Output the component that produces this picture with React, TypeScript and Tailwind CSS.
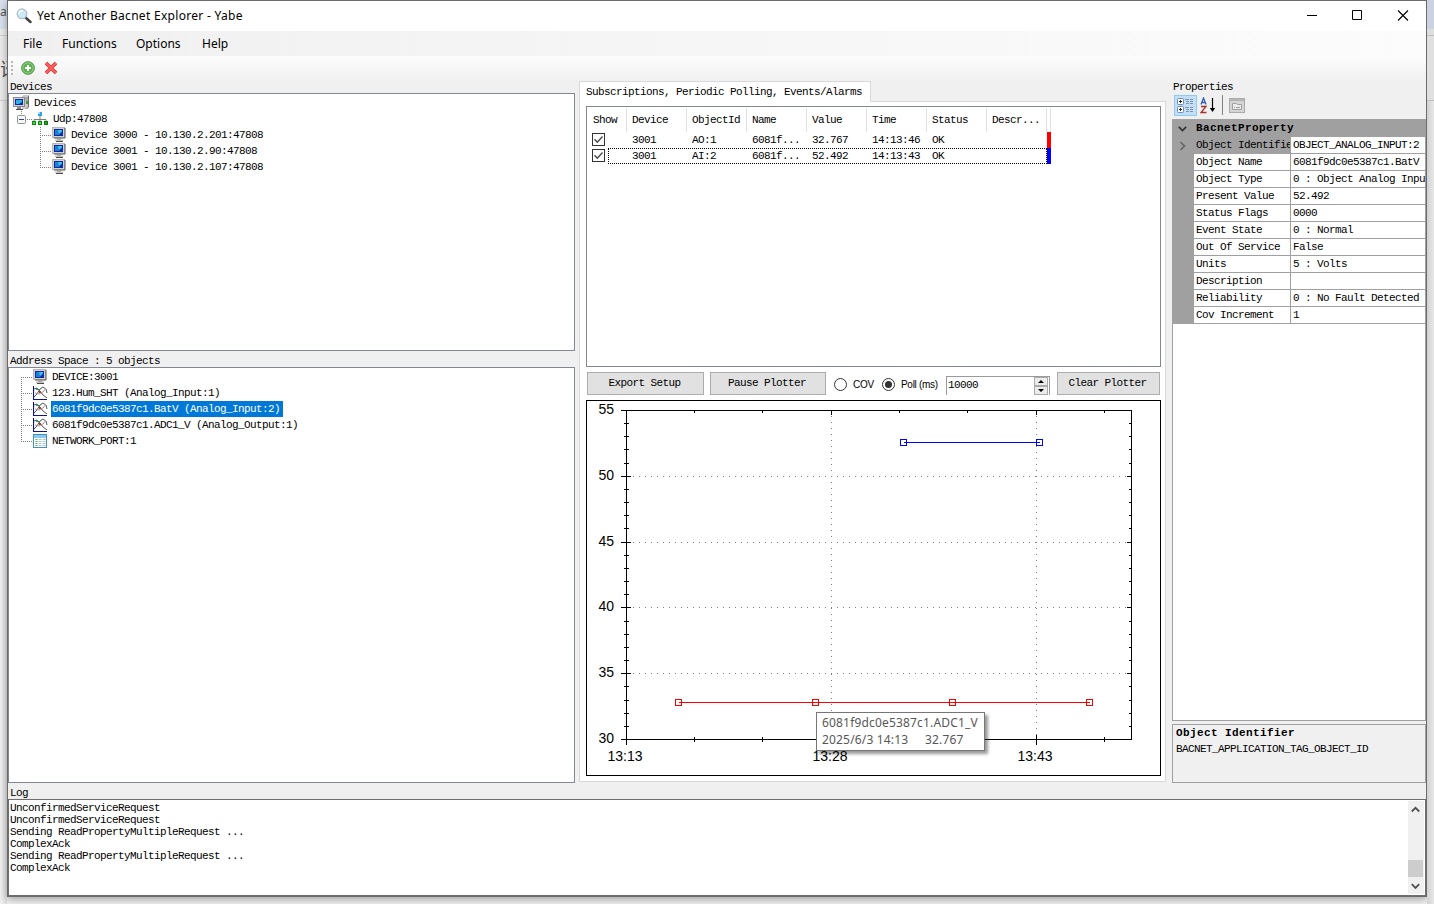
import type { ReactNode } from 'react'
import clsx from 'clsx'

const MONO = "font-['Liberation_Mono',monospace] text-[11px] tracking-[-0.6px]"
const UI = "font-['Noto_Sans',sans-serif]"

const devices = [
  'Device 3000 - 10.130.2.201:47808',
  'Device 3001 - 10.130.2.90:47808',
  'Device 3001 - 10.130.2.107:47808',
]

const objects = [
  { icon: 'device', label: 'DEVICE:3001' },
  { icon: 'analog', label: '123.Hum_SHT (Analog_Input:1)' },
  { icon: 'analog', label: '6081f9dc0e5387c1.BatV (Analog_Input:2)', selected: true },
  { icon: 'analog', label: '6081f9dc0e5387c1.ADC1_V (Analog_Output:1)' },
  { icon: 'table', label: 'NETWORK_PORT:1' },
]

const columns = ['Device', 'ObjectId', 'Name', 'Value', 'Time', 'Status', 'Descr...']

const subscriptions = [
  ['3001', 'AO:1', '6081f...', '32.767', '14:13:46', 'OK', ''],
  ['3001', 'AI:2', '6081f...', '52.492', '14:13:43', 'OK', ''],
]

const properties = [
  ['Object Name', '6081f9dc0e5387c1.BatV'],
  ['Object Type', '0 : Object Analog Inpu'],
  ['Present Value', '52.492'],
  ['Status Flags', '0000'],
  ['Event State', '0 : Normal'],
  ['Out Of Service', 'False'],
  ['Units', '5 : Volts'],
  ['Description', ''],
  ['Reliability', '0 : No Fault Detected'],
  ['Cov Increment', '1'],
]

const logLines = [
  'UnconfirmedServiceRequest',
  'UnconfirmedServiceRequest',
  'Sending ReadPropertyMultipleRequest ...',
  'ComplexAck',
  'Sending ReadPropertyMultipleRequest ...',
  'ComplexAck',
]

function MonitorIcon() {
  return (
    <svg width="16" height="16" viewBox="0 0 16 16" className="shrink-0">
      <rect x="0.5" y="0.5" width="12" height="10" fill="#d6d3ce" stroke="#b9b7af" />
      <path d="M13 1v10H2" fill="none" stroke="#55555c" />
      <rect x="2" y="2" width="9" height="7" fill="#0a2aa8" />
      <path d="M3 3h7v2L7 8H3z" fill="#1c7fd0" />
      <path d="M6 3h4v1L7 7z" fill="#3fc0f0" />
      <path d="M5 11h4v2H5z" fill="#9b9b98" />
      <path d="M3 12.5h8V14H3z" fill="#c5c3be" />
      <path d="M4 14.5h7" stroke="#4c4c4c" />
    </svg>
  )
}

function ComputerIcon() {
  return (
    <svg width="16" height="16" viewBox="0 0 16 16" className="shrink-0">
      <path d="M9 1l2-1h5v12l-2 2H9z" fill="#c9c9c9" />
      <path d="M15.5 1v11l-2 2" fill="none" stroke="#6c6c6c" />
      <path d="M12 3h3M12 5h3" stroke="#8d8d8d" />
      <path d="M13 6h2v3h-2z" fill="#3b9b35" />
      <rect x="0.5" y="2.5" width="11" height="9" fill="#d6d3ce" stroke="#8c8c8c" />
      <rect x="2" y="4" width="8" height="6" fill="#0a2aa8" />
      <path d="M3 5h6v2L6 9H3z" fill="#2db3ea" />
      <path d="M4 12h4v2H4z" fill="#8b8b8b" />
      <path d="M3 14.5h7" stroke="#444" />
    </svg>
  )
}

function NetworkIcon() {
  return (
    <svg width="16" height="16" viewBox="0 0 16 16" className="shrink-0">
      <path d="M8 5v3M2 11V8.5h12V11M8 8v3" fill="none" stroke="#7d7d7d" />
      <rect x="6" y="1" width="4" height="4" fill="#2aa3e8" />
      <rect x="6" y="1" width="2" height="2" fill="#9ce0fb" />
      <rect x="0.5" y="10.5" width="3" height="3" fill="#3ddb3d" stroke="#0b8a0b" />
      <rect x="6.5" y="10.5" width="3" height="3" fill="#3ddb3d" stroke="#0b8a0b" />
      <rect x="12.5" y="10.5" width="3" height="3" fill="#18a818" stroke="#0b7a0b" />
    </svg>
  )
}

function AnalogIcon() {
  return (
    <svg width="16" height="16" viewBox="0 0 16 16" className="shrink-0">
      <path d="M0.5 1v13.5H14" fill="none" stroke="#10109c" strokeWidth="1.2" />
      <path d="M1 4l3-1 3 3 3 4 4 3" fill="none" stroke="#555" />
      <path d="M1 12l3-3 3-5 3-2 3 2 1 4" fill="none" stroke="#4c5a5a" />
      <path d="M2 8l4 1 4-2 3-4" fill="none" stroke="#9a9a9a" />
      <rect x="3" y="3" width="2" height="2" fill="#2e9b72" />
      <rect x="6" y="6" width="2" height="2" fill="#c33" />
    </svg>
  )
}

function TableIcon() {
  return (
    <svg width="16" height="16" viewBox="0 0 16 16" className="shrink-0">
      <rect x="0.5" y="1.5" width="13" height="13" fill="#fff" stroke="#3f8fc4" />
      <rect x="1" y="2" width="12" height="3" fill="#8cc9ec" />
      <path d="M2.5 6.5h2M2.5 8.5h2M2.5 10.5h2M2.5 12.5h2" stroke="#58b558" />
      <path
        d="M5.5 6.5h3M9.5 6.5h3M5.5 8.5h3M9.5 8.5h3M5.5 10.5h3M9.5 10.5h3M5.5 12.5h3M9.5 12.5h3"
        stroke="#a9c6e2"
      />
    </svg>
  )
}

function Branch({ first, last, width, x }: { first?: boolean; last?: boolean; width: number; x: number }) {
  return (
    <svg width={width} height="16" viewBox={`0 0 ${width} 16`} className="shrink-0">
      <path
        d={`M${x + 0.5} ${first ? 8 : 0}V${last ? 9 : 16}M${x} 8.5H${width}`}
        fill="none"
        stroke="#808080"
        strokeDasharray="1 1"
      />
    </svg>
  )
}

function TitleBar() {
  return (
    <div className="flex h-[30px] items-center bg-white">
      <svg width="16" height="16" viewBox="0 0 16 16" className="ml-2">
        <path d="M9.5 9.5l5 4.5" stroke="#3f3f3f" strokeWidth="2.4" strokeLinecap="round" />
        <circle cx="6" cy="5.8" r="4.8" fill="#cdeaf8" stroke="#b3c0ca" strokeWidth="1.3" />
        <path d="M3 5.5A3 3 0 0 1 7 2.8" stroke="#fff" strokeWidth="1.3" fill="none" />
      </svg>
      <span className={clsx(UI, 'ml-[5px] text-[12px] tracking-[0.3px] whitespace-pre text-black')}>
        Yet Another Bacnet Explorer - Yabe
      </span>
      <div className="ml-auto flex items-center pr-[17px] pb-px">
        <svg width="102" height="11" viewBox="0 0 102 11" fill="none" stroke="#000">
          <path d="M0 5.5h10" />
          <path d="M45.5 0.5h9v9h-9z" />
          <path d="M91 0.5l10 10M101 0.5l-10 10" strokeWidth="1.1" />
        </svg>
      </div>
    </div>
  )
}

function MenuBar() {
  return (
    <div
      className={clsx(
        UI,
        'flex h-[25px] items-center bg-linear-to-r from-[#f0f0f0] to-[#fcfcfc] pl-[15px] text-[12px] tracking-normal text-black',
      )}
    >
      <span className="w-[39px]">File</span>
      <span className="w-[74px]">Functions</span>
      <span className="w-[66px]">Options</span>
      <span>Help</span>
    </div>
  )
}

function ToolBar() {
  return (
    <div className="flex h-[25px] items-center bg-linear-to-b from-[#fdfdfd] to-[#f0f0f0] pb-[2px] pl-[3px]">
      <svg width="2" height="14" viewBox="0 0 2 14" fill="#b8b8b8">
        <path d="M0 0h2v2H0zM0 4h2v2H0zM0 8h2v2H0zM0 12h2v2H0z" />
      </svg>
      <svg width="14" height="14" viewBox="0 0 14 14" className="ml-2">
        <circle cx="7" cy="7" r="6.3" fill="#5cb050" stroke="#3f8f3a" />
        <circle cx="7" cy="7" r="5.2" fill="none" stroke="#a5d99a" strokeWidth="0.8" />
        <path d="M7 4v6M4 7h6" stroke="#fff" strokeWidth="2" />
      </svg>
      <svg width="14" height="14" viewBox="0 0 14 14" className="ml-[9px]">
        <path d="M2 2l10 10M12 2l-10 10" stroke="#d92f2f" strokeWidth="3.6" />
        <path d="M2 2l10 10M12 2l-10 10" stroke="#f8605c" strokeWidth="2.2" />
      </svg>
    </div>
  )
}

function DeviceTree() {
  return (
    <div className="h-[258px] border border-[#828790] bg-white pt-px">
      <div className="flex h-4 items-center pl-1">
        <ComputerIcon />
        <span className="ml-[5px]">Devices</span>
      </div>
      <div className="flex h-4 items-center pl-2">
        <svg width="15" height="16" viewBox="0 0 15 16" className="shrink-0">
          <path d="M4.5 0v4M10 8.5h5" stroke="#808080" strokeDasharray="1 1" />
          <rect x="0.5" y="4.5" width="8" height="8" rx="1" fill="#f6f6f6" stroke="#919191" />
          <path d="M2 8.5h5" stroke="#33498a" />
        </svg>
        <NetworkIcon />
        <span className="ml-[5px]">Udp:47808</span>
      </div>
      {devices.map((d, i) => (
        <div key={d} className="flex h-4 items-center pl-[31px]">
          <Branch x={0} width={12} last={i === devices.length - 1} />
          <MonitorIcon />
          <span className="ml-[3px] whitespace-pre">{d}</span>
        </div>
      ))}
    </div>
  )
}

function AddressTree() {
  return (
    <div className="h-[416px] border border-[#828790] bg-white pt-px">
      {objects.map((o, i) => (
        <div key={o.label} className="flex h-4 items-center pl-3">
          <Branch x={0} width={12} first={i === 0} last={i === objects.length - 1} />
          {o.icon === 'device' && <MonitorIcon />}
          {o.icon === 'analog' && <AnalogIcon />}
          {o.icon === 'table' && <TableIcon />}
          <span
            className={clsx(
              'ml-[2px] h-4 pr-[3px] pl-px leading-4 whitespace-pre',
              o.selected && 'bg-[#0078d7] text-white',
            )}
          >
            {o.label}
          </span>
        </div>
      ))}
    </div>
  )
}

function SubscriptionList() {
  return (
    <div className="h-[261px] border border-[#828790] bg-white pt-px">
      <div className="flex h-6">
        <span className="w-10 border-r border-[#e2e2e2] pl-[6px] leading-6">Show</span>
        {columns.map((c) => (
          <span key={c} className="w-[60px] border-r border-[#e2e2e2] pl-[5px] leading-6">
            {c}
          </span>
        ))}
        <span className="w-1 border-r border-[#e2e2e2]" />
      </div>
      {subscriptions.map((row, i) => (
        <div key={row[1]} className="flex h-4">
          <svg width="13" height="13" viewBox="0 0 13 13" className="mt-px mr-[3px] ml-[5px] shrink-0">
            <rect x="0.5" y="0.5" width="12" height="12" fill="#fff" stroke="#333" />
            <path d="M2.5 6.3l2.8 2.9 5.2-5.7" fill="none" stroke="#444" strokeWidth="1.3" />
          </svg>
          <div
            className={clsx(
              'box-border flex w-[439px] border border-dotted pl-[18px] leading-4',
              i === 1 ? 'border-black' : 'border-transparent',
            )}
          >
            {row.map((cell, j) => (
              <span key={j} className="-mt-px w-[60px] shrink-0 pl-[5px]">
                {cell}
              </span>
            ))}
          </div>
          <span className={clsx('h-4 w-1', i === 0 ? 'bg-[#ff0000]' : 'bg-[#0000ff]')} />
        </div>
      ))}
    </div>
  )
}

function Button({ className, children }: { className: string; children: ReactNode }) {
  return (
    <button className={clsx('h-[23px] border border-[#adadad] bg-[#e1e1e1] pr-[2px]', className)}>{children}</button>
  )
}

function Radio({ checked }: { checked?: boolean }) {
  return (
    <svg width="13" height="13" viewBox="0 0 13 13" className="shrink-0">
      <circle cx="6.5" cy="6.5" r="6" fill="#fff" stroke="#333" />
      {checked && <circle cx="6.5" cy="6.5" r="3.5" fill="#333" />}
    </svg>
  )
}

function PlotControls() {
  return (
    <div className="flex h-[33px] items-start pt-[5px] pl-px">
      <Button className="w-[117px]">Export Setup</Button>
      <Button className="ml-[6px] w-[116px]">Pause Plotter</Button>
      <div className="mt-[2px] ml-2 flex h-[21px] items-center font-['Liberation_Sans',sans-serif] text-[10px] tracking-[-0.3px]">
        <Radio />
        <span className="w-[35px] pl-[6px]">COV</span>
        <Radio checked />
        <span className="w-[51px] pl-[6px] whitespace-pre">Poll (ms)</span>
      </div>
      <div className="mt-1 flex h-[19px] w-[104px] border border-b-0 border-[#9a9a9a] bg-white">
        <span className="grow pl-px leading-4">10000</span>
        <svg width="15" height="18" viewBox="0 0 15 18">
          <rect x="0.5" y="0.5" width="13" height="8" fill="#ececec" stroke="#ababab" />
          <rect x="0.5" y="9.5" width="13" height="8" fill="#ececec" stroke="#ababab" />
          <path d="M4 6l3-3 3 3zM4 12l3 3 3-3z" fill="#000" />
        </svg>
      </div>
      <Button className="ml-[7px] w-[103px]">Clear Plotter</Button>
    </div>
  )
}

// Plot area in chart coordinates
const LEFT = 39.5
const RIGHT = 544.5
const TOP = 9.5
const BOTTOM = 338.5
const yAt = (v: number) => Math.round(BOTTOM - ((v - 30) * (BOTTOM - TOP)) / 25 - 0.5) + 0.5
const yMinor = Array.from({ length: 26 }, (_, i) => 30 + i)
const xMinor = [107.5, 175.5, 312.5, 380.5, 517.5]
const xMajor = [244.5, 449.5]

function Series({ xs, y, color }: { xs: number[]; y: number; color: string }) {
  return (
    <g>
      <rect x={xs[0]} y={y - 0.5} width={xs[xs.length - 1] - xs[0]} height="1" fill={color} />
      {xs.map((x) => (
        <rect key={x} x={x - 3} y={y - 3} width="6" height="6" fill="none" stroke={color} />
      ))}
    </g>
  )
}

function Chart() {
  return (
    <div className="relative h-[376px] border border-black bg-white">
      <svg width="573" height="374" viewBox="0 0 573 374" shapeRendering="crispEdges">
        <g stroke="#808080" strokeDasharray="1 5" fill="none">
          {[35, 40, 45, 50].map((v) => (
            <path key={v} d={`M${LEFT + 6} ${yAt(v)}H${RIGHT}`} />
          ))}
          {xMajor.map((x) => (
            <path key={x} d={`M${x} ${TOP + 5}V${BOTTOM}`} />
          ))}
        </g>
        <g stroke="#000" fill="none">
          <path d={`M${LEFT - 5} ${TOP}H${RIGHT}V${BOTTOM}H${LEFT - 5}M${LEFT} ${TOP}V${BOTTOM + 5.5}`} />
          {yMinor.map((v) =>
            v % 5 === 0 ? (
              <path key={v} d={`M${LEFT - 5.5} ${yAt(v)}h10M${RIGHT} ${yAt(v)}h-4.5`} />
            ) : (
              <path key={v} d={`M${LEFT - 2.5} ${yAt(v)}h5M${RIGHT} ${yAt(v)}h-2.5`} />
            ),
          )}
          {xMinor.map((x) => (
            <path key={x} d={`M${x} ${TOP}v2.5M${x} ${BOTTOM - 2.5}v5`} />
          ))}
          {xMajor.map((x) => (
            <path key={x} d={`M${x} ${TOP}v4.5M${x} ${BOTTOM - 4.5}v10`} />
          ))}
        </g>
        <Series xs={[316.5, 452.5]} y={41.5} color="#0000ff" />
        <Series xs={[91.5, 228.5, 365.5, 502.5]} y={301.5} color="#ff0000" />
        <g className="font-['Liberation_Sans',sans-serif] text-[14px] tracking-normal" fill="#000">
          {[55, 50, 45, 40, 35, 30].map((v) => (
            <text key={v} x="27" y={yAt(v) + 3.5} textAnchor="end">
              {v}
            </text>
          ))}
          <text x="38" y="360" textAnchor="middle">13:13</text>
          <text x="243" y="360" textAnchor="middle">13:28</text>
          <text x="448" y="360" textAnchor="middle">13:43</text>
        </g>
      </svg>
      <div
        className={clsx(
          UI,
          'absolute top-[311px] left-[229px] h-[39px] w-[169px] border border-[#767676] bg-white pt-px pl-[5px] text-[12px] leading-[17px] tracking-[0.17px] whitespace-pre text-[#575757] shadow-[3px_3px_3px_rgba(0,0,0,0.4)]',
        )}
      >
        <div>6081f9dc0e5387c1.ADC1_V</div>
        <div className="flex">
          <span className="w-[103px]">2025/6/3 14:13</span>
          <span>32.767</span>
        </div>
      </div>
    </div>
  )
}

function CenterPanel() {
  return (
    <div className="ml-1 flex w-[587px] flex-col">
      <div className="z-10 -mb-px h-[21px] w-[292px] border border-b-0 border-[#d9d9d9] bg-white pl-[6px] leading-5 whitespace-pre">
        Subscriptions, Periodic Polling, Events/Alarms
      </div>
      <div className="h-[681px] border border-[#d9d9d9] bg-white pt-1 pr-1 pl-[6px]">
        <SubscriptionList />
        <PlotControls />
        <Chart />
      </div>
    </div>
  )
}

function PropertyToolbar() {
  return (
    <div className="mt-[2px] flex h-6 items-start pl-[2px]">
      <span className="flex h-[21px] w-[23px] items-center justify-center border border-[#90c8f6] bg-[#c2dff5]">
        <svg width="17" height="17" viewBox="0 0 17 17" fill="none">
          <rect x="0.5" y="1.5" width="6" height="6" rx="1" fill="#fff" stroke="#6d89b5" />
          <rect x="0.5" y="9.5" width="6" height="6" rx="1" fill="#fff" stroke="#6d89b5" />
          <path d="M2 4.5h3M3.5 3v3M2 12.5h3M3.5 11v3" stroke="#222" />
          <path
            d="M8 2.5h4M13 2.5h3M9 4.5h3M13 4.5h3M9 6.5h3M13 6.5h3M8 10.5h4M13 10.5h3M9 12.5h3M13 12.5h3M9 14.5h3M13 14.5h3"
            stroke="#7f93ad"
          />
        </svg>
      </span>
      <svg width="17" height="17" viewBox="0 0 17 17" fill="none" className="mt-[2px] ml-[3px]">
        <path d="M1 7.5L3.5 1 6 7.5M2 5.5h3" stroke="#2f5fb0" strokeWidth="1.3" />
        <path d="M1 9.5h5L1 15.5h5.5" stroke="#a8302c" strokeWidth="1.3" />
        <path d="M12.5 1v11" stroke="#000" strokeWidth="1.2" />
        <path d="M9.8 11h5.4l-2.7 4z" fill="#000" />
      </svg>
      <span className="ml-[5px] h-5 w-px bg-[#808080]" />
      <svg width="16" height="15" viewBox="0 0 16 15" fill="none" className="mt-[3px] ml-[6px]">
        <rect x="0.5" y="0.5" width="15" height="14" fill="#d5d5d5" stroke="#ababab" />
        <path d="M1 2h14" stroke="#b5b5b5" strokeWidth="2" />
        <path d="M3.5 5.5h4l1 1h4v5h-9z" fill="#ededed" stroke="#a0a0a0" />
        <path d="M5 9.5h1M7 9.5h4" stroke="#a0a0a0" />
      </svg>
    </div>
  )
}

function PropertiesPanel() {
  return (
    <div className="ml-[6px] flex w-[254px] flex-col">
      <div className="h-3 pl-px leading-[13px]">Properties</div>
      <PropertyToolbar />
      <div className="h-[602px] border border-[#a0a0a0] bg-white">
        <div className="flex h-[17px] items-center bg-[#a0a0a0]">
          <svg width="9" height="6" viewBox="0 0 9 6" className="ml-[5px]">
            <path d="M0.8 0.8l3.7 3.7L8.2 0.8" fill="none" stroke="#333" strokeWidth="1.7" />
          </svg>
          <span className="ml-[9px] font-bold tracking-[0.4px]">BacnetProperty</span>
        </div>
        <div className="flex h-[17px] bg-[#a0a0a0]">
          <svg width="21" height="17" viewBox="0 0 21 17" className="shrink-0">
            <path d="M7.5 5l4 4-4 4" fill="none" stroke="#666" strokeWidth="1.7" />
          </svg>
          <span className="w-[97px] overflow-hidden border-r border-[#a0a0a0] pl-[2px] leading-4 whitespace-pre">
            Object Identifier
          </span>
          <span className="mb-px grow overflow-hidden bg-white pl-[2px] leading-4 whitespace-pre">
            OBJECT_ANALOG_INPUT:2
          </span>
        </div>
        {properties.map(([name, value]) => (
          <div key={name} className="flex h-[17px]">
            <span className="w-[21px] shrink-0 bg-[#a0a0a0]" />
            <span className="w-[97px] shrink-0 border-r border-b border-[#a0a0a0] pl-[2px] leading-4">{name}</span>
            <span className="w-0 grow overflow-hidden border-b border-[#a0a0a0] pl-[2px] leading-4 whitespace-pre">
              {value}
            </span>
          </div>
        ))}
      </div>
      <div className="mt-[3px] h-[59px] border border-[#a0a0a0] pl-[3px] leading-4">
        <div className="font-bold tracking-[0.4px]">Object Identifier</div>
        <div>BACNET_APPLICATION_TAG_OBJECT_ID</div>
      </div>
    </div>
  )
}

function LogPanel() {
  return (
    <div className="flex h-[97px] border border-[#6e6e6e] bg-white py-px pr-px">
      <div className="grow pt-px pl-px leading-3 whitespace-pre">
        {logLines.map((line, i) => (
          <div key={i}>{line}</div>
        ))}
      </div>
      <div className="flex w-4 flex-col items-center bg-[#f0f0f0]">
        <svg width="9" height="7" viewBox="0 0 9 7" className="mt-[5px] mr-px">
          <path d="M0.8 5.5l3.7-3.7 3.7 3.7" fill="none" stroke="#505050" strokeWidth="1.8" />
        </svg>
        <span className="mt-[47px] h-[17px] w-[15px] self-start bg-[#cdcdcd]" />
        <svg width="9" height="7" viewBox="0 0 9 7" className="mt-[6px] mr-px">
          <path d="M0.8 1.2l3.7 3.7 3.7-3.7" fill="none" stroke="#505050" strokeWidth="1.8" />
        </svg>
      </div>
    </div>
  )
}

export default function App() {
  return (
    <div className="flex h-[904px] w-[1434px] overflow-hidden bg-[#f0f0f0]">
      {/* sliver of the window behind, left side */}
      <div className={clsx(UI, 'flex w-[7px] shrink-0 flex-col overflow-hidden text-[#555]')}>
        <div className="h-[29px] bg-[#d9e1ee] pt-1 text-[12px] leading-4">a</div>
        <div className="h-[7px] border-b border-[#cfcfcf] bg-[#ececec]" />
        <div className="flex h-[65px] w-[7px] overflow-hidden border-b border-[#cfcfcf] bg-[#ececec] pt-[20px] font-['Noto_Sans_CJK_SC',sans-serif] text-[18px] leading-6">
          译
        </div>
        <div className="grow bg-linear-to-r from-[#f2f2f2] to-[#dedede]" />
      </div>

      <div
        className={clsx(
          MONO,
          'flex h-[897px] w-[1420px] shrink-0 flex-col border border-[#6b6b6e] bg-[#f0f0f0] text-black shadow-[0_2px_8px_rgba(0,0,0,0.35)]',
        )}
      >
        <TitleBar />
        <MenuBar />
        <ToolBar />
        <div className="flex h-[702px]">
          <div className="w-[567px]">
            <div className="h-3 pl-[2px] leading-[13px]">Devices</div>
            <DeviceTree />
            <div className="h-4 pt-1 pl-[2px] leading-[13px] whitespace-pre">Address Space : 5 objects</div>
            <AddressTree />
          </div>
          <CenterPanel />
          <PropertiesPanel />
        </div>
        <div className="h-4 pt-1 pl-[2px] leading-[13px]">Log</div>
        <LogPanel />
      </div>

      {/* right side of the window behind */}
      <div className="flex w-[7px] shrink-0 flex-col">
        <div className="h-[29px] bg-[#ccd3e0]" />
        <div className="h-[7px] border-b border-[#bdbdbd] bg-[#dedede]" />
        <div className="h-[65px] border-b border-[#bdbdbd] bg-[#e0e0e0]" />
        <div className="grow bg-linear-to-r from-[#d2d2d2] to-[#e8e8e8]" />
      </div>
    </div>
  )
}
